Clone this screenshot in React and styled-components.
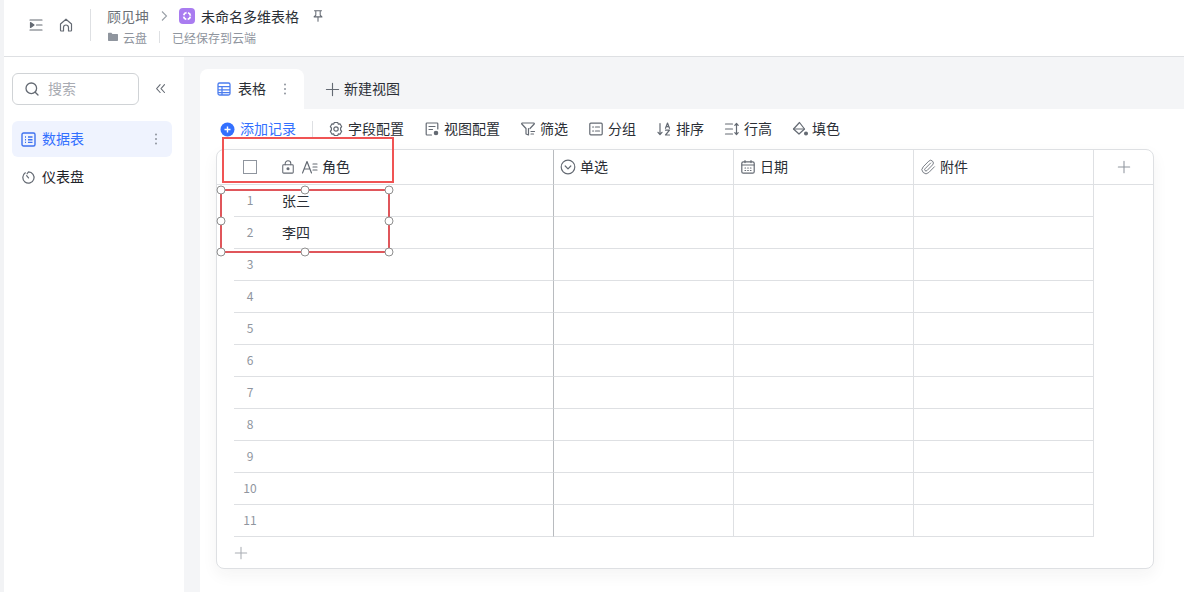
import React from "react";
import styled, { createGlobalStyle } from "styled-components";
import { Paperclip } from "lucide-react";

const Global = createGlobalStyle`
  html, body { margin: 0; padding: 0; background: #fff; }
  body { font-family: "Noto Sans CJK SC", "Noto Sans", sans-serif; color: #1f2329; }
  * { box-sizing: border-box; }
`;

const Page = styled.div`
  width: 1184px; height: 592px; overflow: hidden; position: relative;
  display: flex; flex-direction: column; border-left: 4px solid #f2f3f5;
  background: #fff;
`;
const Header = styled.header`
  height: 57px; flex: none; display: flex; align-items: flex-start;
  border-bottom: 1px solid #dee0e3; padding: 9px 0 0 24px;
`;
const HeadIcons = styled.div`
  display: flex; align-items: center; gap: 14px; height: 32px; padding-right: 16px; margin-right: 16px;
  border-right: 1px solid #dee0e3; color: #646a73;
`;
const Crumbs = styled.div`
  display: flex; flex-direction: column; gap: 2px; margin-top: -2px;
`;
const CrumbTop = styled.div`
  display: flex; align-items: center; height: 18px; font-size: 14px; line-height: 18px;
`;
const Owner = styled.span` color: #6b6f76; `;
const Chevron = styled.svg` flex: none; margin-right: 6px; `;
const DocName = styled.span` color: #2b2f36; margin-right: 12px; `;
const CrumbBottom = styled.div`
  display: flex; align-items: center; height: 20px; font-size: 12px; color: #8f959e;
`;
const SmallDivider = styled.span`
  width: 1px; height: 12px; background: #dee0e3; margin: 0 12px;
`;
const DocIcon = styled.span`
  width: 16px; height: 16px; border-radius: 4px; background: #a97cf0; margin: 0 6px 0 0;
  display: flex; align-items: center; justify-content: center; flex: none;
`;
const FolderIcon = styled.svg` margin-right: 4px; flex: none; `;
const Body = styled.div` flex: 1; display: flex; min-height: 0; `;
const Sidebar = styled.aside`
  width: 180px; flex: none; padding: 16px 12px 0 8px; background: #fff;
`;
const SearchRow = styled.div` display: flex; align-items: center; height: 32px; margin-bottom: 16px; `;
const Search = styled.div`
  width: 127px; height: 32px; border: 1px solid #d0d3d6; border-radius: 6px; display: flex;
  align-items: center; padding-left: 11px; gap: 8px; font-size: 14px; color: #a8abb2;
`;
const Collapse = styled.span` margin-left: 15px; display: flex; color: #646a73; `;
const NavItem = styled.div`
  height: 36px; width: 160px; border-radius: 6px; display: flex; align-items: center;
  padding: 0 9px; gap: 6px; font-size: 14px; margin-bottom: 2px;
  background: ${p => (p.$active ? "#eff3fe" : "transparent")};
  color: ${p => (p.$active ? "#3370ff" : "#1f2329")};
`;
const NavMore = styled.span` margin-left: auto; display: flex; color: #8f959e; margin-right: 5px; `;
const Main = styled.main`
  flex: 1; background: #f4f5f7; padding: 12px 0 0 16px; display: flex; flex-direction: column; min-width: 0;
`;
const Tabs = styled.div` display: flex; height: 40px; flex: none; `;
const ActiveTab = styled.div`
  width: 104px; background: #fff; border-radius: 8px 8px 0 0; display: flex; align-items: center;
  padding-left: 16px; gap: 6px; font-size: 14px; color: #2b2f36;
`;
const TabMore = styled.span` margin-left: 11px; display: flex; color: #8f959e; `;
const NewView = styled.div`
  display: flex; align-items: center; gap: 4px; margin-left: 21px; font-size: 14px; color: #2b2f36;
`;
const NewViewIcon = styled.span` display: flex; color: #646a73; `;
const Panel = styled.div`
  flex: 1; background: #fff; padding: 0 30px 0 16px; display: flex; flex-direction: column;
`;
const Toolbar = styled.div`
  height: 40px; flex: none; display: flex; align-items: center; padding-left: 4px; font-size: 14px; color: #2b2f36;
`;
const Tool = styled.div`
  display: flex; align-items: center; gap: ${p => p.$gap || 4}px; margin-right: ${p => p.$mr ?? 20}px; white-space: nowrap;
  color: ${p => p.$c || "inherit"}; flex: none;
`;
const ToolDivider = styled.span` width: 1px; height: 16px; background: #dee0e3; margin: 0 15px 0 0; flex: none; `;
const Label = styled.span` margin-top: -2px; `;
const Card = styled.div`
  height: 420px; width: 938px; border: 1px solid #dee0e3; border-radius: 8px; background: #fff; flex: none;
  box-shadow: 0 6px 16px rgba(31,35,41,.05); overflow: hidden; position: relative;
`;
const Grid = styled.div`
  display: grid; grid-template-columns: 336px 180px 180px 180px 60px;
  grid-template-rows: 35px repeat(11, 32px);
`;
const HeadCell = styled.div`
  border-bottom: 1px solid #dee0e3; border-left: ${p => (p.$first ? "none" : `1px solid ${p.$strong ? "#b8bbbf" : "#dee0e3"}`)};
  display: flex; align-items: center; font-size: 14px; color: #2b2f36; gap: 4px; padding-left: 6px;
`;
const FirstHead = styled(HeadCell)` padding-left: 26px; `;
const AddHead = styled(HeadCell)` justify-content: center; color: #8f959e; padding-left: 0; `;
const Check = styled.span`
  width: 14px; height: 14px; border: 1px solid #8f959e; margin-right: 20px; flex: none;
`;
const TypeIcon = styled.span` display: flex; margin-left: 3px; color: #646a73; `;
const RowCell = styled.div`
  display: flex; align-items: center; font-size: 14px; color: #2b2f36; margin-left: 17px;
  border-bottom: 1px solid #dee0e3; height: 32px; padding-bottom: 2px;
`;
const RowNum = styled.span` width: 32px; text-align: center; font-size: 12px; color: #8f959e; margin-right: 16px; `;
const Cell = styled.div`
  border-bottom: 1px solid #dee0e3; border-left: 1px solid ${p => (p.$strong ? "#b8bbbf" : "#dee0e3")};
`;
const EmptyAdd = styled.div` border-left: 1px solid #dee0e3; `;
const AddRow = styled.div` height: 32px; display: flex; align-items: center; padding-left: 17px; color: #a9adb3; `;
const RedBox = styled.div`
  position: absolute; left: 218px; top: 137px; width: 172px; height: 46px; border: 2px solid #f05454;
  pointer-events: none;
`;
const SelBox = styled.div`
  position: absolute; left: 216px; top: 189px; width: 170px; height: 64px; border: 2px solid #e0565b;
  pointer-events: none;
`;
const Handle = styled.span`
  position: absolute; width: 9px; height: 9px; border-radius: 50%; background: #fff; border: 1px solid #8f8f8f;
  left: ${p => p.$x}; top: ${p => p.$y}; transform: translate(-50%, -50%);
`;
const Svg = styled.svg` flex: none; color: ${p => p.$c || "inherit"}; `;

const I = ({ s = 16, children, sw = 1.2, c }) => (
  <Svg width={s} height={s} viewBox="0 0 16 16" fill="none" stroke="currentColor" strokeWidth={sw}
    strokeLinecap="round" strokeLinejoin="round" $c={c}>{children}</Svg>
);
const Plus = ({ s = 16 }) => <I s={s}><path d="M8 1.5v13M1.5 8h13" /></I>;
const Dots = () => (
  <svg width="4" height="14" viewBox="0 0 4 14" fill="currentColor"><circle cx="2" cy="2.5" r="1" /><circle cx="2" cy="7" r="1" /><circle cx="2" cy="11.5" r="1" /></svg>
);
const TableIcon = () => (
  <svg width="16" height="16" viewBox="0 0 16 16" fill="none" stroke="#4c7dee" strokeWidth="1.3">
    <rect x="2" y="2" width="12" height="12" rx="1.5" />
    <path d="M2 5.7h12M2 8.8h12M2 11.7h12M6 5.7V14" />
  </svg>
);
const rows = [["1", "张三"], ["2", "李四"], ["3"], ["4"], ["5"], ["6"], ["7"], ["8"], ["9"], ["10"], ["11"]];
const far = "calc(100% + 1px)";
const near = "-1px";
const handles = [[near, near], ["50%", near], [far, near], [far, "50%"], [far, far], ["50%", far], [near, far], [near, "50%"]];
const gray = "#646a73";

export default function App() {
  return (
    <Page>
      <Global />
      <Header>
        <HeadIcons>
          <I><path d="M2 3h12M8.5 8H14M2 13h12" /><path d="M2.5 5.6 6 8l-3.5 2.4z" fill="currentColor" /></I>
          <I><path d="M2.5 7 8 2.2 13.5 7v6.3a.7.7 0 0 1-.7.7H10.5V10.5a2.5 2.5 0 0 0-5 0V14H3.2a.7.7 0 0 1-.7-.7z" /></I>
        </HeadIcons>
        <Crumbs>
          <CrumbTop>
            <Owner>顾见坤</Owner>
            <Chevron width="24" height="12" viewBox="0 0 24 12" fill="none" stroke="#9aa0a8" strokeWidth="1.1"><path d="M13 1.5 17.5 6 13 10.5" /></Chevron>
            <DocIcon>
              <svg width="14" height="14" viewBox="0 0 14 14" fill="none" stroke="#fff" strokeWidth="1.8"><circle cx="7" cy="7" r="3.4" strokeDasharray="3.9 1.44" strokeDashoffset="-0.6" /></svg>
            </DocIcon>
            <DocName>未命名多维表格</DocName>
            <I s={14} c={gray}><path d="M4 2h8M5.5 2v5L3.5 9h9l-2-2V2M8 9v5" /></I>
          </CrumbTop>
          <CrumbBottom>
            <FolderIcon width="12" height="12" viewBox="0 0 12 12" fill="#8f959e"><path d="M1 2.5a.7.7 0 0 1 .7-.7h2.7l1 1.2h5a.7.7 0 0 1 .6.7v5.6a.7.7 0 0 1-.7.7H1.7a.7.7 0 0 1-.7-.7z" /></FolderIcon>
            云盘
            <SmallDivider />
            已经保存到云端
          </CrumbBottom>
        </Crumbs>
      </Header>
      <Body>
        <Sidebar>
          <SearchRow>
            <Search>
              <I s={16} sw={1.3} c={gray}><circle cx="7.3" cy="7.3" r="5.3" /><path d="M11.2 11.2 14 14" /></I>
              <Label>搜索</Label>
            </Search>
            <Collapse>
              <I s={14}><path d="M7 3 3 7.5 7 12M12 3 8 7.5l4 4.5" /></I>
            </Collapse>
          </SearchRow>
          <NavItem $active>
            <Svg width="15" height="15" viewBox="0 0 15 15" fill="none" stroke="#3f72ef" strokeWidth="1.4"><rect x="1" y="1" width="13" height="13" rx="1.5" /><path d="M4 5h1M7 5h4.5M4 7.7h1M7 7.7h4.5M4 10.4h1M7 10.4h4.5" /></Svg>
            <Label>数据表</Label>
            <NavMore><Dots /></NavMore>
          </NavItem>
          <NavItem>
            <I s={15} sw={1.3} c={gray}><path d="M4.6 3A6 6 0 1 0 8 2L6.5 4M6 6l2 2.5" /></I>
            <Label>仪表盘</Label>
          </NavItem>
        </Sidebar>
        <Main>
          <Tabs>
            <ActiveTab>
              <TableIcon />
              <Label>表格</Label>
              <TabMore><Dots /></TabMore>
            </ActiveTab>
            <NewView><NewViewIcon><Plus s={15} /></NewViewIcon><Label>新建视图</Label></NewView>
          </Tabs>
          <Panel>
            <Toolbar>
              <Tool $c="#3370ff" $mr={16} $gap={5}>
                <svg width="15" height="15" viewBox="0 0 15 15"><circle cx="7.5" cy="7.5" r="7" fill="#3370ff" /><path d="M7.5 4.5v6M4.5 7.5h6" stroke="#fff" strokeWidth="1.4" /></svg>
                <Label>添加记录</Label>
              </Tool>
              <ToolDivider />
              <Tool>
                <I c={gray}><path d="M6.3 1.5h3.4l.6 1.6 1.7-.3 1.7 2.9L12.6 7v2l1.1 1.3-1.7 2.9-1.7-.3-.6 1.6H6.3l-.6-1.6-1.7.3-1.7-2.9L3.4 9V7L2.3 5.7 4 2.8l1.7.3z" /><circle cx="8" cy="8" r="2.2" /></I>
                <Label>字段配置</Label>
              </Tool>
              <Tool>
                <I c={gray}><path d="M7.5 14H3a.8.8 0 0 1-.8-.8V2.8A.8.8 0 0 1 3 2h10a.8.8 0 0 1 .8.8V8M5 5.5h6M5 8.5h3.5" /><circle cx="12" cy="12" r="1.7" fill="currentColor" /></I>
                <Label>视图配置</Label>
              </Tool>
              <Tool>
                <I c={gray}><path d="M2.2 2h11.6a.6.6 0 0 1 .4 1L10 7.5M6 7.5 1.8 3a.6.6 0 0 1 .4-1M6 7.5V13l2.5 1V7.5M11 10.5h3.5M11 13h2.5" /></I>
                <Label>筛选</Label>
              </Tool>
              <Tool>
                <I c={gray}><rect x="1.8" y="2.2" width="12.4" height="11.6" rx="1" /><path d="M4.6 6h1M7.5 6h4M4.6 10h1M7.5 10h4" /></I>
                <Label>分组</Label>
              </Tool>
              <Tool>
                <I c={gray}><path d="M4 2.5v11M2 11.3l2 2.2 2-2.2M9.5 7.3l2-5.3 2 5.3M10.2 5.6h2.6M9.5 9.2h4l-4 4.8h4" /></I>
                <Label>排序</Label>
              </Tool>
              <Tool>
                <I c={gray}><path d="M1.5 3h7M1.5 8h7M1.5 13h7M12.5 2.5v11M10.8 4.3l1.7-1.8 1.7 1.8M10.8 11.7l1.7 1.8 1.7-1.8" /></I>
                <Label>行高</Label>
              </Tool>
              <Tool $mr={0}>
                <I c={gray}><path d="M7.5 1.5 1.5 8l5.5 5 5.5-5z" /><path d="M1.8 8h10.5" /><circle cx="14" cy="12.5" r="1.4" fill="currentColor" /></I>
                <Label>填色</Label>
              </Tool>
            </Toolbar>
            <Card>
              <Grid>
                <FirstHead $first>
                  <Check />
                  <I s={14} c={gray}><rect x="2" y="5.5" width="12" height="9.5" rx="1" /><path d="M4.8 5.5V4a3.2 3.2 0 0 1 6.4 0v1.5" /><circle cx="8" cy="10" r="1.2" fill="currentColor" /></I>
                  <TypeIcon>
                    <I><path d="M.5 14 5 2.5 9.5 14M2.2 10h5.6M11 5h4M11 8h4M11 11h4" /></I>
                  </TypeIcon>
                  <Label>角色</Label>
                </FirstHead>
                <HeadCell $strong><I c={gray}><circle cx="8" cy="8" r="6.8" /><path d="M5.2 7 8 9.8 10.8 7" /></I><Label>单选</Label></HeadCell>
                <HeadCell><I c={gray}><rect x="1.8" y="2.8" width="12.4" height="11.4" rx="1.5" /><path d="M5 1.6v2M11 1.6v2M2 6h12M5 9h.6M7.7 9h.6M10.4 9h.6M5 11.5h.6M7.7 11.5h.6M10.4 11.5h.6" /></I><Label>日期</Label></HeadCell>
                <HeadCell><Paperclip size={16} strokeWidth={1.3} color={gray} /><Label>附件</Label></HeadCell>
                <AddHead><Plus s={14} /></AddHead>
                {rows.map(([n, t]) => (
                  <React.Fragment key={n}>
                    <RowCell><RowNum>{n}</RowNum>{t}</RowCell>
                    <Cell $strong />
                    <Cell />
                    <Cell />
                    <EmptyAdd />
                  </React.Fragment>
                ))}
              </Grid>
              <AddRow><Plus s={14} /></AddRow>
            </Card>
          </Panel>
        </Main>
      </Body>
      <RedBox />
      <SelBox>
        {handles.map(([x, y]) => <Handle key={x + y} $x={x} $y={y} />)}
      </SelBox>
    </Page>
  );
}
